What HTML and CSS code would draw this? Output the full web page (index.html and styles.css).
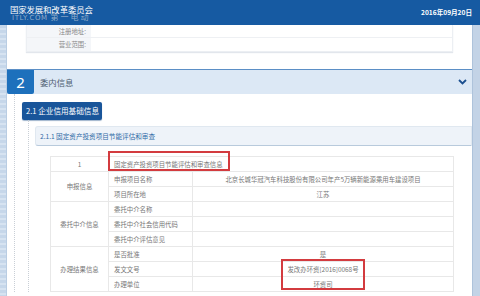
FILE: index.html
```html
<!DOCTYPE html>
<html lang="zh">
<head>
<meta charset="utf-8">
<link rel="stylesheet" href="styles.css">
</head>
<body>
<header class="topbar">
  <div class="brand">
    <span class="brand-title">国家发展和改革委员会</span>
    <span class="watermark"><span class="wm-latin">ITLY.COM</span> <span class="wm-cjk">第一电动</span></span>
  </div>
  <div class="date">2016年09月20日</div>
</header>
<div class="frame">
  <div class="rail-left"></div>
  <main class="content">
    <div class="info-card">
      <div class="info-row"><div class="info-label">注册地址:</div><div class="info-value"></div></div>
      <div class="info-row"><div class="info-label">营业范围:</div><div class="info-value"></div></div>
    </div>
    <section class="section">
      <div class="section-head">
        <div class="section-num">2</div>
        <div class="section-title">委内信息</div>
        <svg class="chevron" width="9" height="6" viewBox="0 0 9 6"><path d="M1 1 L4.5 4.5 L8 1" fill="none" stroke="#1b4f8f" stroke-width="1.8"/></svg>
      </div>
      <div class="section-body">
        <div class="pill">2.1 企业信用基础信息</div>
        <div class="sub-body">
          <div class="sub-head">2.1.1 固定资产投资项目节能评估和审查</div>
          <table class="grid">
            <colgroup><col class="c1"><col class="c2"><col class="c3"></colgroup>
            <tr><td class="center">1</td><td colspan="2" class="left mark-cell">固定资产投资项目节能评估和审查信息<span class="mark mark-a"></span></td></tr>
            <tr><td rowspan="2" class="center">申报信息</td><td class="left">申报项目名称</td><td class="center">北京长城华冠汽车科技股份有限公司年产5万辆新能源乘用车建设项目</td></tr>
            <tr><td class="left">项目所在地</td><td class="center">江苏</td></tr>
            <tr><td rowspan="3" class="center">委托中介信息</td><td class="left">委托中介名称</td><td></td></tr>
            <tr><td class="left">委托中介社会信用代码</td><td></td></tr>
            <tr><td class="left">委托中介评估意见</td><td></td></tr>
            <tr><td rowspan="3" class="center">办理结果信息</td><td class="left">是否批准</td><td class="center">是</td></tr>
            <tr><td class="left">发文文号</td><td class="center mark-cell">发改办环资[2016]0068号<span class="mark mark-b"></span></td></tr>
            <tr><td class="left">办理单位</td><td class="center">环资司</td></tr>
          </table>
        </div>
      </div>
    </section>
  </main>
  <div class="rail-right"></div>
</div>
</body>
</html>
```

FILE: styles.css
```css
* { box-sizing: border-box; }
html, body { margin: 0; padding: 0; }
body {
  width: 480px;
  height: 296px;
  overflow: hidden;
  background: #ffffff;
  font-family: "Noto Sans CJK SC", "Noto Sans", sans-serif;
  color: #777;
}
.topbar {
  height: 25px;
  background: #165aa2;
  display: flex;
  justify-content: space-between;
  align-items: flex-start;
  padding: 4px 8px 0 10px;
  color: #fff;
}
.brand { position: relative; }
.brand-title { font-size: 8.4px; line-height: 11px; display: block; letter-spacing: -0.1px; }
.watermark {
  position: absolute;
  left: 2px;
  top: 8px;
  white-space: nowrap;
  color: rgba(190, 200, 215, 0.75);
  font-size: 8px;
  line-height: 10px;
}
.wm-latin { font-family: "DejaVu Sans", sans-serif; font-size: 7px; letter-spacing: 0.6px; }
.wm-cjk { letter-spacing: 2px; margin-left: 1px; }
.date { font-size: 6.6px; line-height: 10px; margin-top: 3px; font-weight: bold; }

.frame { display: flex; height: 271px; }
.rail-left {
  width: 7px;
  background: #c6d7ea repeating-linear-gradient(180deg, #c6d7ea 0 3px, #d6e3f1 3px 5px);
  border-right: 1px solid #b9cde3;
}
.rail-right {
  width: 8px;
  background: #c3d3e6;
  border-left: 1px solid #aec3db;
}
.content { flex: 1; display: flex; flex-direction: column; }

.info-card {
  margin: 0 19px 0 19px;
  border: 1px solid #eceff3;
  border-top: none;
  box-shadow: 0 1px 1px #e2e6ec;
  height: 27px;
}
.info-row { display: flex; height: 13px; border-bottom: 1px solid #eef0f3; }
.info-row:last-child { border-bottom: none; }
.info-label {
  width: 64px;
  background: #f4f6f9;
  text-align: right;
  padding-right: 5px;
  font-size: 6.4px;
  line-height: 13px;
  color: #888;
}
.info-value { flex: 1; }

.section { margin-top: 17px; border-top: 1px solid #5b8fc6; }
.section-head {
  height: 24px;
  background: #dce8f5;
  display: flex;
  align-items: center;
}
.section-num {
  width: 27px;
  height: 24px;
  background: #1d70bc;
  color: #fff;
  font-family: "Noto Sans", sans-serif;
  font-size: 15px;
  line-height: 24px;
  text-align: center;
  border-radius: 0 0 2px 2px;
}
.section-title { flex: 1; padding-left: 6px; font-size: 8.4px; color: #4d5d70; }
.chevron { margin-right: 5px; }

.section-body {
  margin-left: 7px;
  border-left: 1px dotted #c9cfd6;
  padding-top: 8px;
}
.pill {
  margin-left: 7px;
  width: 80px;
  height: 18px;
  background: #19559a;
  color: #fff;
  border-radius: 2px;
  font-size: 7.6px;
  line-height: 18px;
  padding-left: 4px;
  white-space: nowrap;
  box-shadow: 0 1px 1px #9fb4cc;
}
.sub-body {
  margin-left: 13px;
  border-left: 1px dotted #c9cfd6;
  padding-top: 6px;
}
.sub-head {
  margin-left: 6px;
  height: 20px;
  background: #eef3f9;
  border: 1px solid #e0e8f0;
  border-bottom: 1px solid #b8cadc;
  border-radius: 3px 0 0 3px;
  font-size: 6.6px;
  line-height: 18px;
  padding-left: 4px;
  color: #2f6aa6;
}
.grid {
  margin: 10px 0 0 21px;
  width: 403px;
  border-collapse: collapse;
  table-layout: fixed;
  font-size: 6.4px;
  color: #777;
}
.c1 { width: 58px; }
.c2 { width: 84px; }
.c3 { width: 261px; }
.grid td {
  border: 1px solid #e8e8e8;
  height: 15px;
  padding: 0;
  line-height: 13px;
  white-space: nowrap;
  overflow: visible;
}
.grid td.center { text-align: center; }
.grid td.left { text-align: left; padding-left: 5px; }
.mark-cell { position: relative; }
.mark {
  position: absolute;
  border: 2px solid #d33b3f;
  pointer-events: none;
}
.mark-a { left: -1px; top: -6px; width: 122px; height: 20px; }
.mark-b { left: 88px; top: -3px; width: 84px; height: 31px; }
```
